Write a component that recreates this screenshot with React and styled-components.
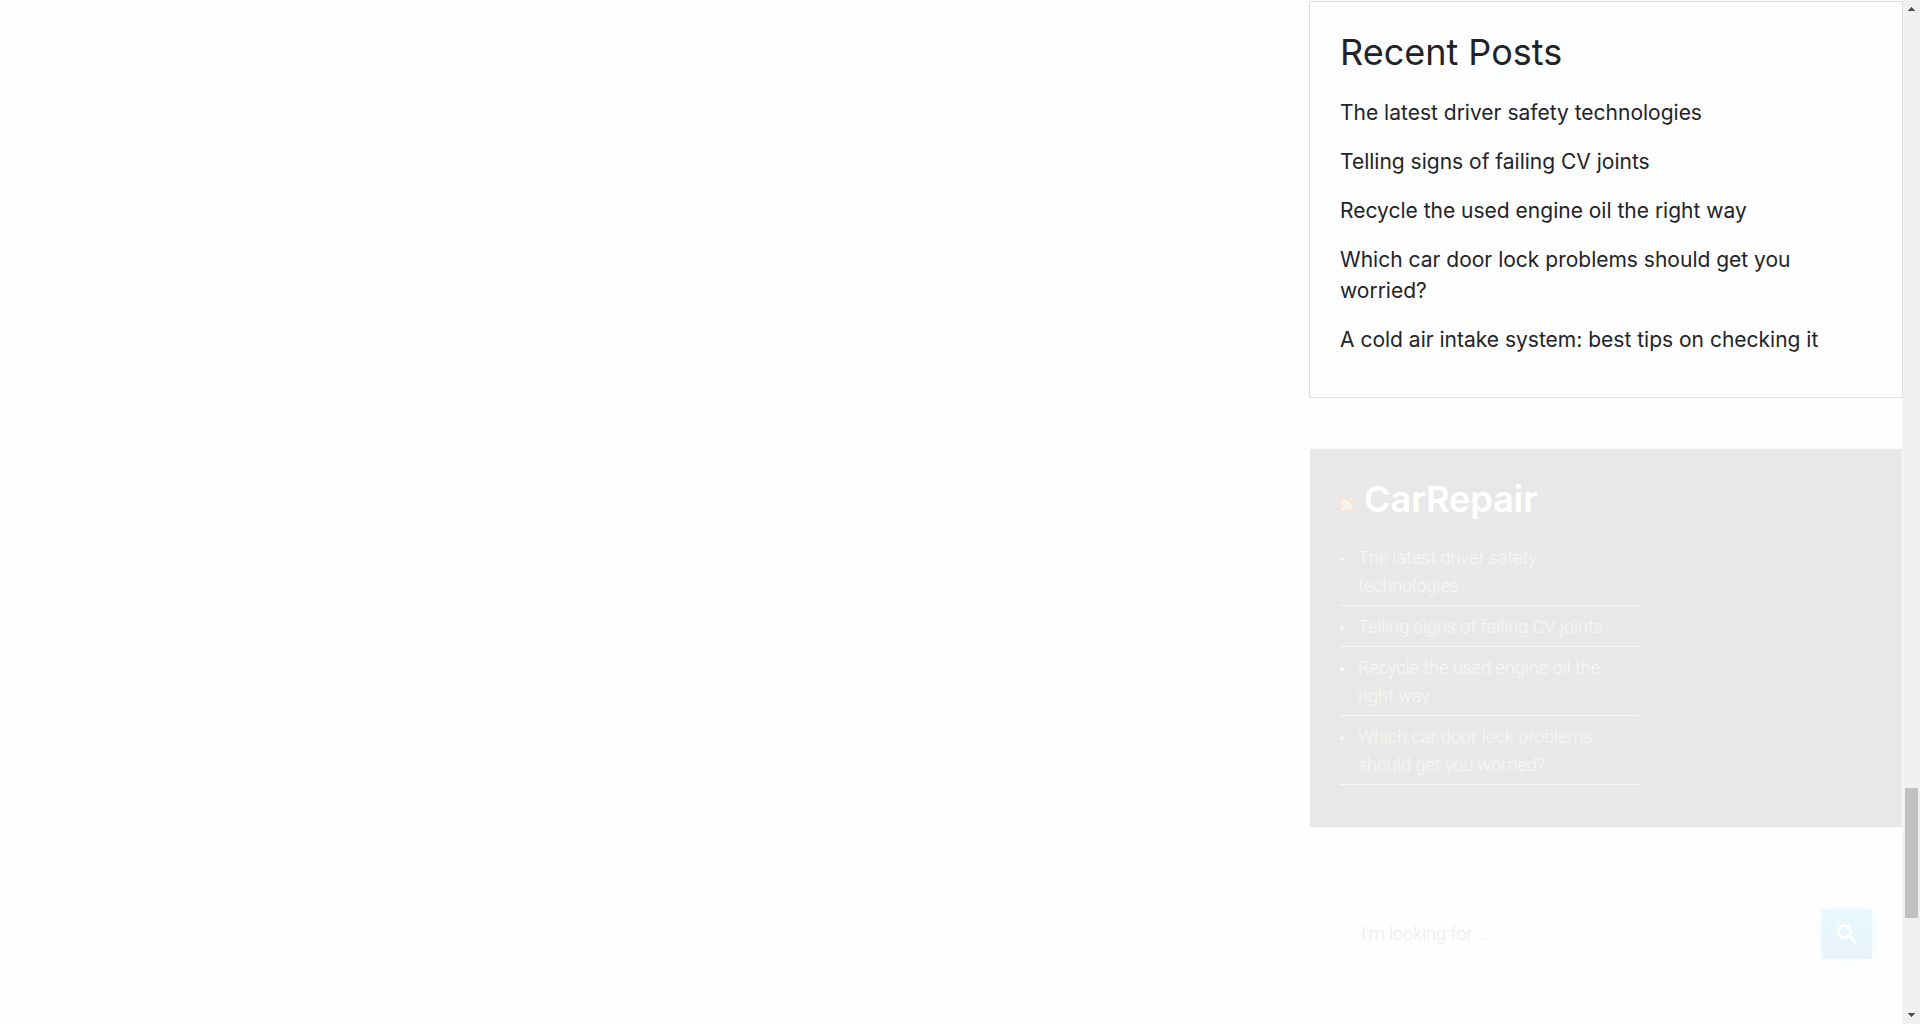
import React from "react";
import styled, { createGlobalStyle } from "styled-components";

const GlobalStyle = createGlobalStyle`
  *, *::before, *::after { box-sizing: border-box; }
  body {
    margin: 0;
    background: #fefefe;
    color: #222328;
    font-family: Roboto, "Liberation Sans", sans-serif;
  }
`;

const Page = styled.div`
  display: flex;
  height: 100vh;
  overflow: hidden;
`;

const Layout = styled.div`
  flex: 1;
  min-width: 0;
  display: grid;
  grid-template-columns: minmax(0, 1309fr) minmax(0, 594fr);
`;

const Main = styled.main``;

const Sidebar = styled.aside`
  display: flex;
  flex-direction: column;
  gap: 50px;
  padding-top: 1px;
`;

const Widget = styled.section`
  flex: none;
  padding: 30px 30px 42px;
  border: 1px solid ${(p) => (p.$faded ? "#fbfbfc" : "#dddee5")};
  background: ${(p) => (p.$dark ? "#e8e8e8" : "transparent")};
  background-clip: padding-box;
`;

const Title = styled.h2`
  display: flex;
  align-items: baseline;
  gap: 10px;
  margin: 0 0 25px;
  font-family: Inter, "Open Sans", sans-serif;
  font-size: 36px;
  line-height: 40px;
  font-weight: ${(p) => (p.$light ? 600 : 400)};
  color: ${(p) => (p.$light ? "#ffffff" : "#222328")};
`;

const PlainLink = styled.a`
  color: inherit;
  text-decoration: none;
`;

const PostList = styled.ul`
  list-style: none;
  display: flex;
  flex-direction: column;
  gap: 18px;
  margin: 0;
  padding: 0;
  font-family: Inter, "Open Sans", sans-serif;
  font-size: 21px;
  line-height: 31px;
`;

const FeedList = styled.ul`
  list-style: none;
  width: 56%;
  margin: 0;
  padding: 0;
  font-size: 18px;
  line-height: 28px;
  font-weight: 300;
  color: #f7f7f7;
`;

const FeedItem = styled.li`
  display: flex;
  gap: 14px;
  padding: 7px 0 5px;
  border-bottom: 1px solid #f8f8f8;
  &:first-child { padding-top: 0; }
  &::before {
    content: "";
    flex: none;
    width: 4px;
    height: 4px;
    margin-top: 13px;
    border-radius: 2px;
    background: #f7f7f7;
  }
`;

const SearchForm = styled.form`
  display: flex;
  height: 50px;
`;

const SearchInput = styled.input`
  flex: 1;
  min-width: 0;
  padding: 0 20px;
  border: 1px solid #fbfbfc;
  border-right: 0;
  border-radius: 0;
  background: transparent;
  font: 300 18px/28px Roboto, "Liberation Sans", sans-serif;
  color: #e8e8e8;
  outline: none;
  &::placeholder { color: #ececec; opacity: 1; }
`;

const SearchButton = styled.button`
  flex: none;
  display: grid;
  place-items: center;
  width: 50px;
  padding: 0;
  border: 0;
  background: linear-gradient(#e9f7fd, #e8f3fb);
  box-shadow: 0 0 10px rgba(0, 160, 230, 0.05);
`;

const Scrollbar = styled.div`
  flex: none;
  display: flex;
  flex-direction: column;
  align-items: center;
  width: 17px;
  background: #f0f0f0;
`;

const ScrollArrow = styled.svg`
  flex: none;
  width: 17px;
  height: 17px;
  fill: #505050;
`;

const Spacer = styled.div`
  flex: ${(p) => p.$grow};
`;

const Thumb = styled.div`
  flex: 130;
  width: 13px;
  background: #c1c1c1;
`;

const posts = [
  "The latest driver safety technologies",
  "Telling signs of failing CV joints",
  "Recycle the used engine oil the right way",
  "Which car door lock problems should get you worried?",
  "A cold air intake system: best tips on checking it",
];

const RssIcon = () => (
  <svg width="14" height="14" viewBox="0 0 14 14" aria-hidden="true">
    <rect width="14" height="14" rx="1" fill="#fae6d9" />
    <circle cx="3.7" cy="10.3" r="1.4" fill="#fff" />
    <path d="M2.4 6.1a5.5 5.5 0 0 1 5.5 5.5M2.4 3a8.6 8.6 0 0 1 8.6 8.6" fill="none" stroke="#fff" strokeWidth="1.3" />
  </svg>
);

const SearchIcon = () => (
  <svg width="26" height="26" viewBox="0 0 26 26" aria-hidden="true">
    <circle cx="10.4" cy="10.4" r="6.1" fill="none" stroke="#fff" strokeWidth="2.7" />
    <path d="M14.8 14.8l6.4 6.4" stroke="#fff" strokeWidth="3" strokeLinecap="round" />
  </svg>
);

export default function App() {
  return (
    <Page>
      <GlobalStyle />
      <Layout>
        <Main />
        <Sidebar>
          <Widget>
            <Title>Recent Posts</Title>
            <PostList>
              {posts.map((post) => (
                <li key={post}><PlainLink href="#">{post}</PlainLink></li>
              ))}
            </PostList>
          </Widget>
          <Widget $dark $faded>
            <Title $light>
              <PlainLink href="#" aria-label="RSS feed"><RssIcon /></PlainLink>
              <PlainLink href="#">CarRepair</PlainLink>
            </Title>
            <FeedList>
              {posts.slice(0, 4).map((post) => (
                <FeedItem key={post}><PlainLink href="#">{post}</PlainLink></FeedItem>
              ))}
            </FeedList>
          </Widget>
          <Widget $faded>
            <SearchForm onSubmit={(e) => e.preventDefault()}>
              <SearchInput type="search" aria-label="Search" placeholder="I'm looking for …" />
              <SearchButton type="submit" aria-label="Search"><SearchIcon /></SearchButton>
            </SearchForm>
          </Widget>
        </Sidebar>
      </Layout>
      <Scrollbar aria-hidden="true">
        <ScrollArrow viewBox="0 0 17 17" shapeRendering="crispEdges"><path d="M8 7h1v1h1v1h1v1h1v1H5v-1h1V9h1V8h1z" /></ScrollArrow>
        <Spacer $grow={771} />
        <Thumb />
        <Spacer $grow={89} />
        <ScrollArrow viewBox="0 0 17 17" shapeRendering="crispEdges"><path d="M5 6h7v1h-1v1h-1v1H9v1H8V9H7V8H6V7H5z" /></ScrollArrow>
      </Scrollbar>
    </Page>
  );
}
